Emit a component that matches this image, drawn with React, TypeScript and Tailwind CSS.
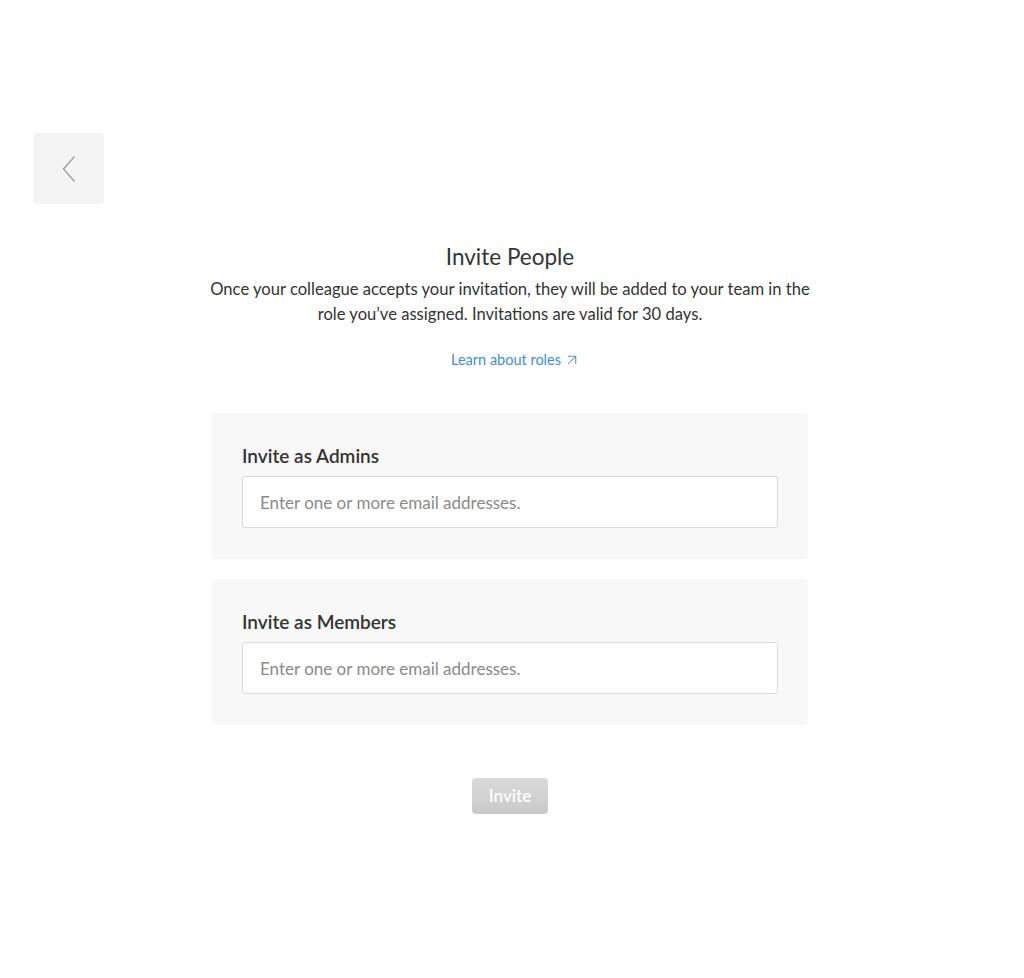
import { ArrowUpRight } from 'lucide-react';

const InviteSection = ({ label }: { label: string }) => (
  <div className="rounded-[4px] bg-[#f8f8f8] px-[30px] pt-[30px] pb-[31px]">
    <label className="block text-[19px] font-semibold leading-[26px] text-[#333]">{label}</label>
    <input
      type="text"
      placeholder="Enter one or more email addresses."
      className="mt-[7px] h-[52px] w-full rounded-[3px] border border-[#d9d9d9] bg-white px-[17px] text-[17px] text-[#333] placeholder:text-[#8a8a8a] outline-none"
    />
  </div>
);

export default function App() {
  return (
    <div className="min-h-[978px] bg-white pt-[133px] font-['Lato',_'Noto_Sans',_sans-serif] text-[#333]">
      <div className="pl-[33px]">
        <button className="flex h-[71px] w-[71px] items-center justify-center rounded-[4px] bg-[#f4f4f4]">
          <svg width="14" height="28" viewBox="0 0 14 28" fill="none">
            <path d="M12.5 1.5 L1.5 14 L12.5 26.5" stroke="#9a9a9a" strokeWidth="1.3" />
          </svg>
        </button>
      </div>

      <div className="ml-[212px] mt-[38px] flex w-[596px] flex-col items-center text-center">
        <h1 className="text-[22.5px] leading-[30px] text-[#333]">Invite People</h1>
        <p className="mt-[5px] w-[604px] text-[16.6px] leading-[25px] text-[#333]">
          Once your colleague accepts your invitation, they will be added to your team in the role you’ve assigned.
          Invitations are valid for 30 days.
        </p>
        <a href="#" className="mt-[22px] flex items-center gap-[2px] pl-[12px] text-[14.5px] leading-[22px] text-[#3b8fd4]">
          Learn about roles
          <ArrowUpRight className="h-[18px] w-[18px]" strokeWidth={1.3} />
        </a>

        <div className="mt-[42px] flex w-full flex-col gap-[20px] text-left">
          <InviteSection label="Invite as Admins" />
          <InviteSection label="Invite as Members" />
        </div>

        <button
          disabled
          className="mt-[53px] h-[36px] w-[76px] rounded-[4px] bg-gradient-to-b from-[#dadada] to-[#c9c9c9] text-[17px] font-semibold text-white"
        >
          Invite
        </button>
      </div>
    </div>
  );
}
